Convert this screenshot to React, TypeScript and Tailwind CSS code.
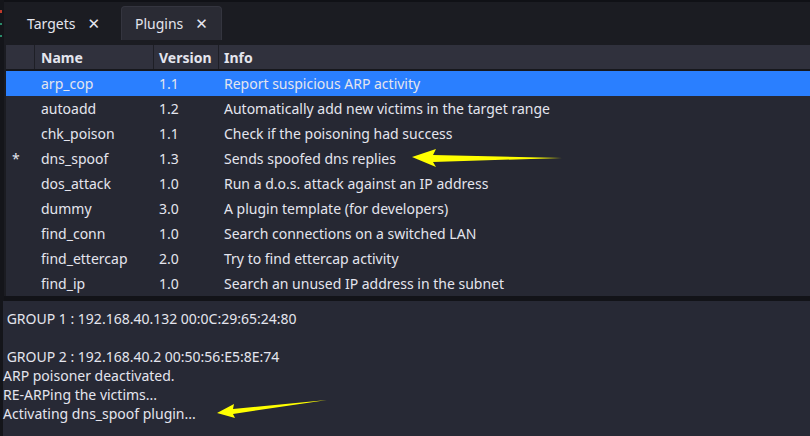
import React from "react";

type Plugin = { mark: string; name: string; version: string; info: string };

const plugins: Plugin[] = [
	{ mark: "", name: "arp_cop", version: "1.1", info: "Report suspicious ARP activity" },
	{ mark: "", name: "autoadd", version: "1.2", info: "Automatically add new victims in the target range" },
	{ mark: "", name: "chk_poison", version: "1.1", info: "Check if the poisoning had success" },
	{ mark: "*", name: "dns_spoof", version: "1.3", info: "Sends spoofed dns replies" },
	{ mark: "", name: "dos_attack", version: "1.0", info: "Run a d.o.s. attack against an IP address" },
	{ mark: "", name: "dummy", version: "3.0", info: "A plugin template (for developers)" },
	{ mark: "", name: "find_conn", version: "1.0", info: "Search connections on a switched LAN" },
	{ mark: "", name: "find_ettercap", version: "2.0", info: "Try to find ettercap activity" },
	{ mark: "", name: "find_ip", version: "1.0", info: "Search an unused IP address in the subnet" },
];

const logLines = [
	" GROUP 1 : 192.168.40.132 00:0C:29:65:24:80",
	"",
	" GROUP 2 : 192.168.40.2 00:50:56:E5:8E:74",
	"ARP poisoner deactivated.",
	"RE-ARPing the victims...",
	"Activating dns_spoof plugin...",
];

function Arrow({ className }: { className: string }) {
	return (
		<svg className={className} viewBox="0 0 150 18" width="150" height="18">
			<polygon points="0,8 24,0 21,6 150,9 21,13 24,18" fill="#ffff00" />
		</svg>
	);
}

function Tab({ label, active }: { label: string; active?: boolean }) {
	return (
		<div
			className={
				"flex items-center gap-[12px] h-[34px] px-[13px] rounded-t-[4px] " +
				(active ? "bg-[#2a2b34] border border-[#34353f] border-b-0" : "")
			}
		>
			<span>{label}</span>
			<span className="text-[15px] font-bold">✕</span>
		</div>
	);
}

export default function App() {
	return (
		<div
			className="w-[810px] h-[436px] overflow-hidden bg-[#1b1c22] text-[#e4e5ee] text-[14px] flex"
			style={{ fontFamily: "'Noto Sans', 'DejaVu Sans', sans-serif" }}
		>
			<div className="w-[4px] bg-[#14151a] flex flex-col gap-[10px] pt-[10px]">
				<div className="h-[3px] w-[2px] bg-[#c0392b]" />
				<div className="h-[2px] w-[2px] bg-[#2a8a6a]" />
				<div className="h-[2px] w-[2px] bg-[#2a8a6a]" />
			</div>
			<div className="flex-1 flex flex-col">
				<div className="h-[45px] flex items-end pl-[10px] pb-[5px] gap-[8px] border-t-2 border-[#101116]">
					<Tab label="Targets" />
					<Tab label="Plugins" active />
				</div>
				<div className="relative flex flex-col h-[251px] bg-[#262833] ml-[2px]">
					<div className="flex h-[26px] bg-[#30313d] font-bold border-b-2 border-[#17181d]">
						<div className="w-[29px] border-r border-[#1e1f26]" />
						<div className="w-[119px] pl-[6px] flex items-center border-r border-[#1e1f26]">Name</div>
						<div className="w-[65px] pl-[5px] flex items-center border-r border-[#1e1f26]">Version</div>
						<div className="flex-1 pl-[5px] flex items-center">Info</div>
					</div>
					{plugins.map((p, i) => (
						<div key={p.name} className={"flex h-[25px] items-center " + (i === 0 ? "bg-[#2a7fff]" : "")}>
							<div className="w-[29px] pl-[6px]">{p.mark}</div>
							<div className="w-[119px] pl-[6px]">{p.name}</div>
							<div className="w-[65px] pl-[5px]">{p.version}</div>
							<div className="flex-1 pl-[5px] whitespace-nowrap">{p.info}</div>
						</div>
					))}
					<Arrow className="absolute left-[406px] top-[104px]" />
				</div>
				<div className="h-[5px] bg-[#121318]" />
				<div className="relative flex-1 bg-[#272935] pt-[8px] -ml-[1px]">
					{logLines.map((l, i) => (
						<div key={i} className="h-[19px] leading-[19px] whitespace-pre">{l}</div>
					))}
					<svg className="absolute left-[214px] top-[99px]" viewBox="0 0 110 18" width="110" height="18">
						<polygon points="0,13 17,4 16,9 110,0 16,14 18,18" fill="#ffff00" />
					</svg>
				</div>
			</div>
		</div>
	);
}
